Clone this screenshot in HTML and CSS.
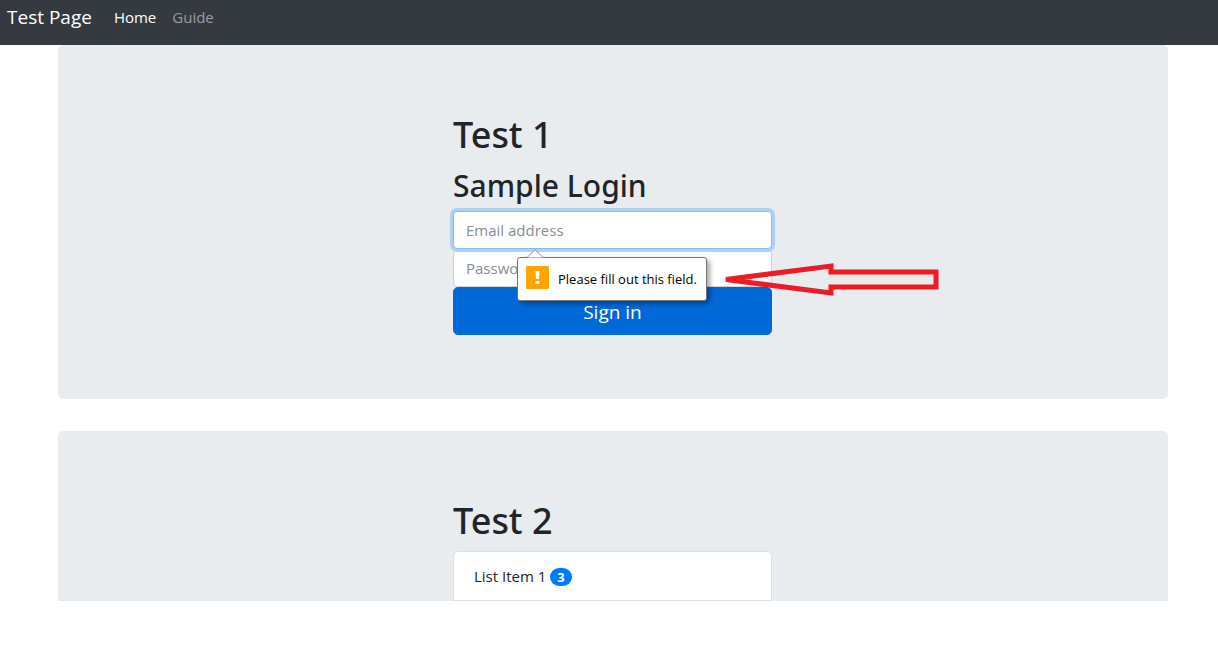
FILE: index.html
```html
<!DOCTYPE html>
<html lang="en">
<head>
<meta charset="utf-8">
<title>Test Page</title>
<link rel="stylesheet" href="styles.css">
</head>
<body>
<nav class="navbar">
  <a class="brand" href="#">Test Page</a>
  <a class="nav-link active" href="#">Home</a>
  <a class="nav-link" href="#">Guide</a>
</nav>
<main class="container">
  <section class="jumbotron">
    <div class="column">
      <h1>Test 1</h1>
      <form class="login">
        <h2>Sample Login</h2>
        <div class="field">
          <input class="control focused" type="email" placeholder="Email address" aria-label="Email address" required>
          <div class="bubble" role="alert">
            <svg class="bubble-tip" width="18" height="9" viewBox="0 0 18 9"><path d="M1 8.5 9 .7l8 7.8" fill="#fff" stroke="#8a8a8a"/></svg>
            <svg class="bubble-icon" width="23" height="23" viewBox="0 0 23 23"><rect width="23" height="23" rx="1.5" fill="#ffa400"/><path d="M9.5 5h4l-.5 8h-3zM9.5 15h4v3h-4z" fill="#fff"/></svg>
            <span>Please fill out this field.</span>
          </div>
          <svg class="arrow" width="218" height="36" viewBox="0 0 218 36"><path d="M4 18.5 109 5v6h105v15H109v6z" fill="none" stroke="#ed1c24" stroke-width="5" stroke-linejoin="miter" stroke-miterlimit="2"/></svg>
        </div>
        <input class="control" type="password" placeholder="Password" aria-label="Password" required>
        <button class="submit" type="submit">Sign in</button>
      </form>
    </div>
  </section>
  <section class="jumbotron cut">
    <div class="column">
      <h1>Test 2</h1>
      <ul class="list">
        <li>List Item 1 <span class="badge">3</span></li>
      </ul>
    </div>
  </section>
</main>
</body>
</html>
```
FILE: styles.css
```css
* { box-sizing: border-box; }
body {
  margin: 0;
  background: #fff;
  color: #212529;
  font: 15px/24px "Open Sans", "Noto Sans", sans-serif;
}
.navbar {
  display: flex;
  align-items: center;
  gap: 16px;
  padding: 2px 7px 13px;
  background: #343a40;
}
.navbar a { color: #999c9f; text-decoration: none; }
.navbar .brand { margin-right: 6px; color: #fff; font-size: 19px; line-height: 30px; }
.navbar .active { color: #fff; }
.container { margin: 0 50px 0 58px; }
.jumbotron {
  margin-bottom: 32px;
  padding: 64px 33px 64px 32px;
  background: #e9ecef;
  border-radius: 5px;
}
.cut { margin-bottom: 0; padding-bottom: 0; border-radius: 5px 5px 0 0; }
.column { max-width: 319px; margin: 0 auto; }
h1, h2 { margin: 0 0 8px; font-family: "Noto Sans", "Open Sans", sans-serif; font-weight: 500; }
h1 { padding-top: 4px; font-size: 36px; line-height: 44px; }
h2 { padding-top: 4px; font-size: 30px; line-height: 34px; }
.field { position: relative; }
.control {
  display: block;
  width: 100%;
  height: 38px;
  padding: 6px 12px;
  border: 1px solid #ced4da;
  border-radius: 4px;
  background: #fff;
  color: #495057;
  font: inherit;
}
.control::placeholder { color: #868e96; opacity: 1; }
.focused { border-color: #80bdff; outline: 0; box-shadow: 0 0 0 3px #b0d0f3; }
.bubble {
  position: absolute;
  z-index: 1;
  top: 46px;
  left: 64px;
  display: flex;
  align-items: center;
  gap: 9px;
  height: 44px;
  padding: 0 9px 0 8px;
  border: 1px solid #767676;
  border-radius: 3px;
  background: #fff;
  box-shadow: 3px 3px 5px rgba(0, 0, 0, .35);
  color: #000;
  font-size: 13px;
  white-space: nowrap;
}
.bubble-icon { margin-bottom: 4px; }
.bubble-tip { position: absolute; top: -9px; left: 8px; }
.arrow { position: absolute; z-index: 1; top: 50px; left: 269px; }
.submit {
  display: block;
  width: 100%;
  height: 48px;
  padding: 2px 0 0;
  border: 1px solid #0069d9;
  border-radius: 5px;
  background: #0069d9;
  color: #fff;
  font: inherit;
  font-size: 19px;
}
.list { margin: 0; padding: 0; list-style: none; }
.list li {
  padding: 12px 20px;
  border: 1px solid #dfdfdf;
  border-radius: 4px 4px 0 0;
  background: #fff;
}
.badge {
  display: inline-block;
  padding: 3px 7px;
  border-radius: 10px;
  background: #007bff;
  color: #fff;
  font-size: 13px;
  font-weight: 700;
  line-height: 12px;
}
```
